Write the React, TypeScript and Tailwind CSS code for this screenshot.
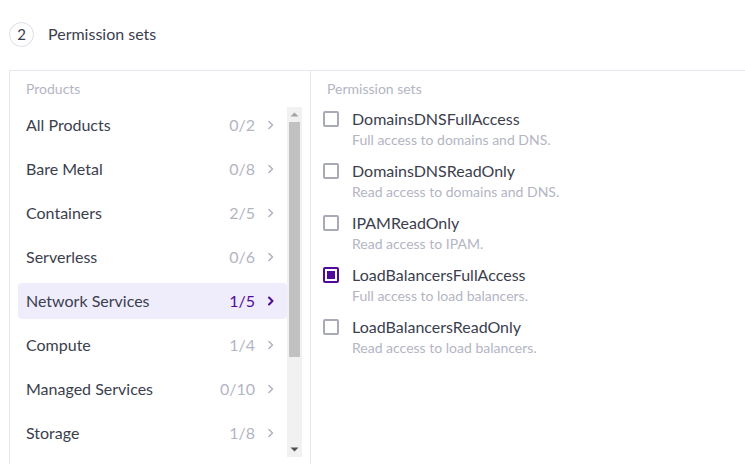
import React from "react";

const products = [
  { name: "All Products", count: "0/2" },
  { name: "Bare Metal", count: "0/8" },
  { name: "Containers", count: "2/5" },
  { name: "Serverless", count: "0/6" },
  { name: "Network Services", count: "1/5", active: true },
  { name: "Compute", count: "1/4" },
  { name: "Managed Services", count: "0/10" },
  { name: "Storage", count: "1/8" },
];

const perms = [
  { name: "DomainsDNSFullAccess", desc: "Full access to domains and DNS." },
  { name: "DomainsDNSReadOnly", desc: "Read access to domains and DNS." },
  { name: "IPAMReadOnly", desc: "Read access to IPAM." },
  { name: "LoadBalancersFullAccess", desc: "Full access to load balancers.", checked: true },
  { name: "LoadBalancersReadOnly", desc: "Read access to load balancers." },
];

function Chevron({ active }: { active?: boolean }) {
  return (
    <svg width="8" height="12" viewBox="0 0 8 12" className="shrink-0">
      <path
        d="M2 2.5 L5.5 6 L2 9.5"
        fill="none"
        stroke={active ? "#4f0a9c" : "#b3b5c2"}
        strokeWidth={active ? 2 : 1.6}
        strokeLinecap="round"
        strokeLinejoin="round"
      />
    </svg>
  );
}

function Scrollbar() {
  return (
    <div className="w-[15px] h-[350px] shrink-0 bg-[#f1f1f1] flex flex-col">
      <div className="h-[15px] flex items-center justify-center">
        <svg width="9" height="5" viewBox="0 0 9 5">
          <path d="M0.5 4.5 L4.5 0.5 L8.5 4.5 Z" fill="#a3a3a3" />
        </svg>
      </div>
      <div className="flex-1 px-[2px]">
        <div className="h-[235px] bg-[#c1c1c1]" />
      </div>
      <div className="h-[15px] flex items-center justify-center">
        <svg width="9" height="5" viewBox="0 0 9 5">
          <path d="M0.5 0.5 L4.5 4.5 L8.5 0.5 Z" fill="#505050" />
        </svg>
      </div>
    </div>
  );
}

export default function App() {
  return (
    <div
      className="w-[745px] h-[464px] overflow-hidden bg-white text-[#3b3e4d]"
      style={{ fontFamily: "Lato, 'Noto Sans', sans-serif" }}
    >
      <div className="flex items-center gap-[14px] pl-[9px] pt-[21px] h-[48px]">
        <div className="w-[25px] h-[25px] rounded-full border border-[#dcdee8] flex items-center justify-center text-[15px] text-[#3b3e4d]">
          2
        </div>
        <div className="text-[16px] leading-[22px] -mt-[1px]">Permission sets</div>
      </div>
      <div className="mt-[22px] ml-[9px] border-l border-t border-[#e6e7ef] flex h-[400px]">
        <div className="w-[301px] shrink-0 border-r border-[#e6e7ef]">
          <div className="pl-[16px] pt-[8px] text-[14px] leading-[20px] text-[#b3b5c3]">Products</div>
          <div className="pl-[8px] mt-[8px] flex">
            <div className="w-[269px] h-[350px] overflow-hidden">
              <div className="flex flex-col gap-[8px]">
                {products.map((p) => (
                  <div
                    key={p.name}
                    className={
                      "h-[36px] shrink-0 rounded-[4px] flex items-center pl-[8px] pr-[12px] text-[16px] " +
                      (p.active ? "bg-[#efedfc]" : "")
                    }
                  >
                    <span className="flex-1">{p.name}</span>
                    <span
                      className={
                        "mr-[12px] " + (p.active ? "text-[#4f0a9c]" : "text-[#b3b5c3]")
                      }
                    >
                      {p.count}
                    </span>
                    <Chevron active={p.active} />
                  </div>
                ))}
              </div>
            </div>
            <Scrollbar />
          </div>
        </div>
        <div className="flex-1">
          <div className="pl-[16px] pt-[8px] text-[14px] leading-[20px] text-[#b3b5c3]">Permission sets</div>
          <div className="pl-[12px] mt-[9px] flex flex-col gap-[10px]">
            {perms.map((p) => (
              <div key={p.name} className="flex">
                <div className="h-[22px] flex items-center">
                  {p.checked ? (
                    <div className="w-[16px] h-[16px] border-2 border-[#4f0a9c] rounded-[2px] flex items-center justify-center">
                      <div className="w-[8px] h-[8px] bg-[#4f0a9c]" />
                    </div>
                  ) : (
                    <div className="w-[16px] h-[16px] border-2 border-[#a8aab8] rounded-[2px]" />
                  )}
                </div>
                <div className="ml-[13px]">
                  <div className="text-[16px] leading-[22px]">{p.name}</div>
                  <div className="text-[14px] leading-[20px] text-[#b3b5c3]">{p.desc}</div>
                </div>
              </div>
            ))}
          </div>
        </div>
      </div>
    </div>
  );
}
